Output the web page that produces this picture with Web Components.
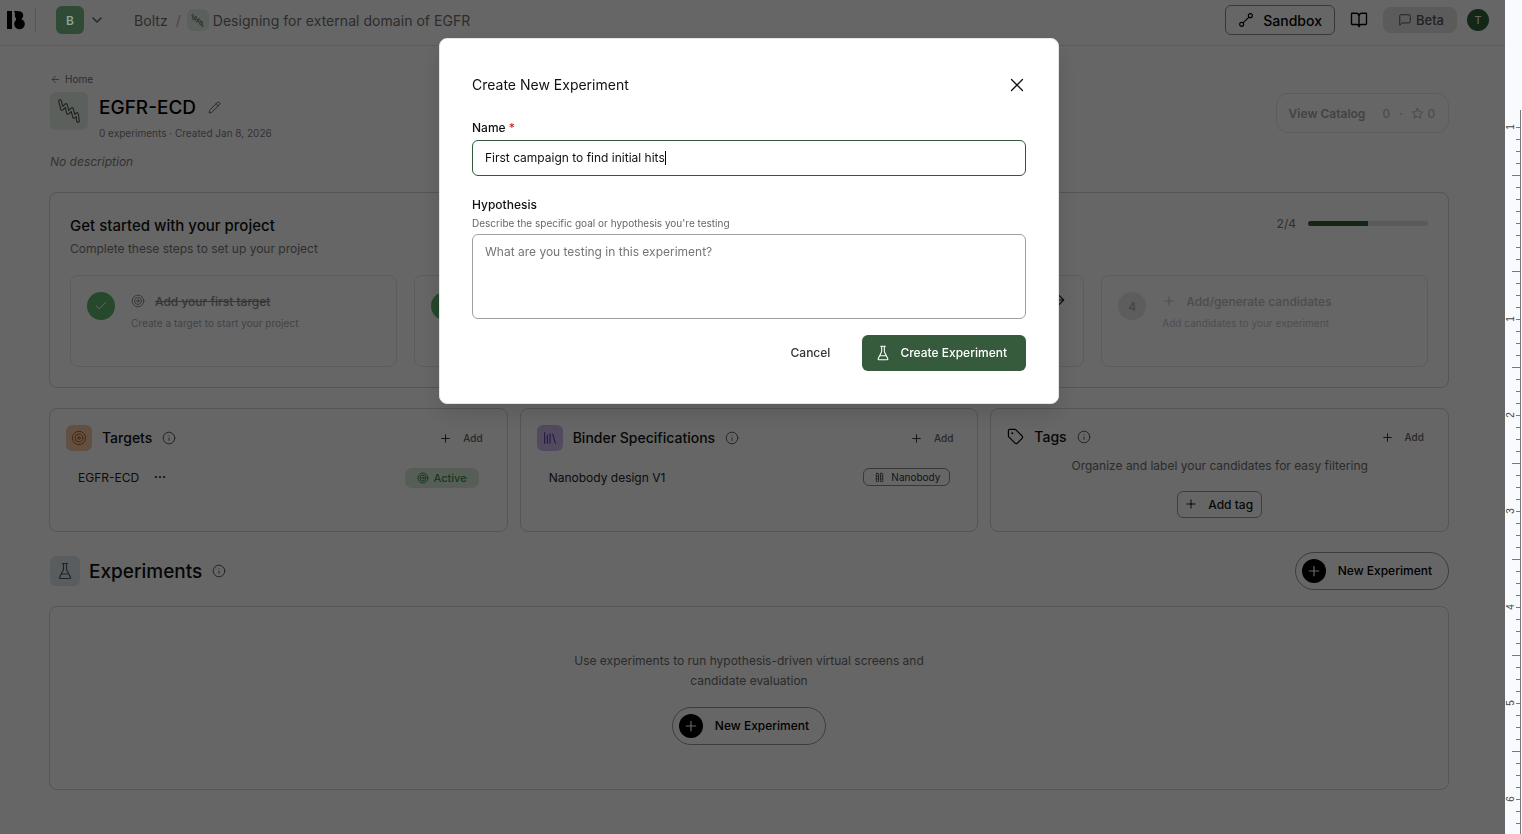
<!DOCTYPE html>
<html>
<head>
<meta charset="utf-8">
<title>EGFR-ECD</title>
<style>
  html, body { margin: 0; height: 100%; overflow: hidden; background: #fff; }
  body { display: flex; font-family: Inter, "Noto Sans", sans-serif; color: #000; }
  .app { position: relative; width: 1505px; height: 834px; flex: none; overflow: hidden; }
</style>
</head>
<body>
<div class="app">
  <app-topbar></app-topbar>
  <project-page></project-page>
  <experiment-modal></experiment-modal>
</div>
<page-ruler></page-ruler>

<script>
// lucide-ish paths, shared by everything
const ICONS = {
  target: '<circle cx="12" cy="12" r="10"/><circle cx="12" cy="12" r="6"/><circle cx="12" cy="12" r="2"/>',
  info: '<circle cx="12" cy="12" r="10"/><path d="M12 16v-4M12 8h.01"/>',
  plus: '<path d="M5 12h14M12 5v14"/>',
  x: '<path d="M18 6 6 18M6 6l12 12"/>',
  check: '<path d="M20 6 9 17l-5-5"/>',
  back: '<path d="m12 19-7-7 7-7M19 12H5"/>',
  right: '<path d="M5 12h14M12 5l7 7-7 7"/>',
  chevron: '<path d="m6 9 6 6 6-6"/>',
  pencil: '<path d="M21.2 6.8a2.8 2.8 0 0 0-4-4L3.8 16.2a2 2 0 0 0-.5.8l-1.3 4.4a.5.5 0 0 0 .6.6l4.4-1.3a2 2 0 0 0 .8-.5z"/><path d="m15 5 4 4"/>',
  star: '<path d="M12 2.5l2.9 6 6.6.9-4.8 4.6 1.2 6.5-5.9-3.1-5.9 3.1 1.2-6.5L2.5 9.4l6.6-.9z"/>',
  book: '<path d="M12 7v14M3 18a1 1 0 0 1-1-1V4a1 1 0 0 1 1-1h5a4 4 0 0 1 4 4 4 4 0 0 1 4-4h5a1 1 0 0 1 1 1v13a1 1 0 0 1-1 1h-6a3 3 0 0 0-3 3 3 3 0 0 0-3-3z"/>',
  message: '<path d="M21 15a2 2 0 0 1-2 2H7l-4 4V5a2 2 0 0 1 2-2h14a2 2 0 0 1 2 2z"/>',
  flask: '<path d="M10 2v7.5a2 2 0 0 1-.2.9L4.7 20.5a1 1 0 0 0 .9 1.5h12.8a1 1 0 0 0 .9-1.5l-5.1-10.1a2 2 0 0 1-.2-.9V2M8.5 2h7M7 16h10"/>',
  tag: '<path d="M12.6 2.6A2 2 0 0 0 11.2 2H4a2 2 0 0 0-2 2v7.2a2 2 0 0 0 .6 1.4l8.7 8.7a2.4 2.4 0 0 0 3.4 0l6.6-6.6a2.4 2.4 0 0 0 0-3.4z"/><circle cx="7.5" cy="7.5" r=".6"/>',
  library: '<path d="m16 6 4 14M12 6v14M8 8v12M4 4v16"/>',
  sandbox: '<circle cx="5.5" cy="18.5" r="3"/><circle cx="18.5" cy="5.5" r="3"/><path d="M8 16 16 8"/>',
  nanobody: '<rect x="5" y="3" width="5" height="18" rx="1"/><rect x="14" y="3" width="5" height="18" rx="1"/><path d="M5 9h5M5 15h5M14 9h5M14 15h5"/>',
  // ribbon: dark line with a lighter one down the middle
  helix: '<path d="M3 2 5 10 9 6 11 14 15 10 17 18 20 15 21 22" stroke-width="3.6"/><path d="M3 2 5 10 9 6 11 14 15 10 17 18 20 15 21 22" stroke="#e4efe5" stroke-width="1.6"/>'
};

class UiIcon extends HTMLElement {
  connectedCallback() {
    const size = this.getAttribute('size') || 16;
    const sw = this.getAttribute('stroke') || 2;
    const root = this.shadowRoot || this.attachShadow({ mode: 'open' });
    root.innerHTML = `<style>:host{display:inline-flex;flex:none;line-height:0}</style>
      <svg width="${size}" height="${size}" viewBox="0 0 24 24" fill="none" stroke="currentColor" stroke-width="${sw}" stroke-linecap="round" stroke-linejoin="round">${ICONS[this.getAttribute('name')] || ''}</svg>`;
  }
}
customElements.define('ui-icon', UiIcon);

class AppTopbar extends HTMLElement {
  constructor() {
    super();
    this.attachShadow({ mode: 'open' });
    this.shadowRoot.innerHTML = `
      <style>
        :host { display: flex; align-items: center; height: 45px; box-sizing: content-box; border-bottom: 1px solid #e8e8e8; font-size: 14px; padding: 0 16px 0 7px; }
        .wrap { display: flex; align-items: center; flex: 1; height: 40px; margin-bottom: 5px; }
        .logo { display: block; }
        .sep { width: 1px; height: 24px; background: #d8d8d8; margin: 0 20px 0 10px; }
        .org { position: relative; z-index: 60; width: 28px; height: 28px; border-radius: 6px; background: #2f4a35; color: #8fa493; display: flex; align-items: center; justify-content: center; font-size: 12px; font-weight: 600; }
        .chev { margin: 0 0 0 5px; color: #555; }
        .crumbs { display: flex; align-items: center; margin-left: 29px; color: #707070; letter-spacing: .04px; }
        .slash { color: #b0b0b0; margin: 0 6px 0 8px; }
        .badge { width: 22px; height: 22px; border-radius: 6px; background: #e4efe5; color: #555; display: flex; align-items: center; justify-content: center; margin-right: 4px; }
        .right { margin-left: auto; display: flex; align-items: center; }
        .sandbox { display: flex; align-items: center; gap: 9px; height: 28px; padding: 0 12px; border: 1px solid #8d8d8d; border-radius: 6px; color: #000; font-weight: 500; }
        .book { margin: 0 15px; color: #000; }
        .beta { display: flex; align-items: center; gap: 4px; height: 26px; padding: 0 13px 0 15px; border-radius: 8px; background: #e4e4e4; color: #555; font-size: 13px; font-weight: 500; }
        .avatar { margin-left: 10px; width: 22px; height: 22px; border-radius: 50%; background: #2f6237; color: #fff; display: flex; align-items: center; justify-content: center; font-size: 11px; }
      </style>
      <div class="wrap">
        <svg class="logo" width="18" height="20" viewBox="0 0 18 20"><path d="M0 1h5v18H0z"/><circle cx="12" cy="5.5" r="4.2"/><circle cx="12.5" cy="14" r="5.3"/><path d="M7 1h4v5H9zM9 8h4v3H9z"/></svg>
        <span class="sep"></span>
        <span class="org">B</span>
        <ui-icon class="chev" name="chevron" size="16"></ui-icon>
        <div class="crumbs">
          <span>Boltz</span><span class="slash">/</span>
          <span class="badge"><ui-icon name="helix" size="13"></ui-icon></span>
          <span>Designing for external domain of EGFR</span>
        </div>
        <div class="right">
          <span class="sandbox"><ui-icon name="sandbox" size="16" stroke="1.7"></ui-icon>Sandbox</span>
          <ui-icon class="book" name="book" size="18" stroke="1.8"></ui-icon>
          <span class="beta"><ui-icon name="message" size="14" stroke="1.7"></ui-icon>Beta</span>
          <span class="avatar">T</span>
        </div>
      </div>`;
  }
}
customElements.define('app-topbar', AppTopbar);

class SetupStep extends HTMLElement {
  constructor() {
    super();
    this.attachShadow({ mode: 'open' });
    const done = this.hasAttribute('done');
    const muted = this.hasAttribute('muted');
    this.shadowRoot.innerHTML = `
      <style>
        :host { display: flex; gap: 16px; padding: 16px; height: 92px; box-sizing: border-box; border: 1px solid #e6e6e6; border-radius: 8px; position: relative; }
        .num { width: 28px; height: 28px; border-radius: 50%; flex: none; display: flex; align-items: center; justify-content: center; font-size: 12px; font-weight: 600; background: ${done ? '#5fb36f' : '#e8e8e8'}; color: ${done ? '#fff' : '#b0b0b0'}; }
        .head { display: flex; align-items: center; gap: 10px; height: 18px; font-size: 12px; font-weight: 500; color: ${done ? '#888' : '#bdbdbd'}; }
        .head span { ${done ? 'text-decoration: line-through;' : ''} }
        .sub { margin-top: 5px; font-size: 10px; line-height: 16px; color: ${muted ? '#c4c4c4' : '#a8a8a8'}; letter-spacing: .03px; }
        .go { position: absolute; right: 16px; top: 16px; color: #222; }
      </style>
      <div class="num">${done ? '<ui-icon name="check" size="14" stroke="1.6"></ui-icon>' : (this.getAttribute('n') || '')}</div>
      <div>
        <div class="head"><ui-icon name="${this.getAttribute('icon')}" size="14" stroke="1.6"></ui-icon><span>${this.getAttribute('title') || ''}</span></div>
        <div class="sub">${this.getAttribute('sub') || ''}</div>
      </div>
      ${this.hasAttribute('go') ? '<ui-icon class="go" name="right" size="16" stroke="1.8"></ui-icon>' : ''}`;
  }
}
customElements.define('setup-step', SetupStep);

class InfoCard extends HTMLElement {
  constructor() {
    super();
    this.attachShadow({ mode: 'open' });
    const icon = this.getAttribute('icon');
    const tint = this.getAttribute('tint');
    const ink = this.getAttribute('ink');
    const box = tint
      ? `<span class="ico" style="background:${tint};color:${ink}"><ui-icon name="${icon}" size="16" stroke="1.5"></ui-icon></span>`
      : `<span class="plain"><ui-icon name="${icon}" size="17" stroke="1.7"></ui-icon></span>`;
    this.shadowRoot.innerHTML = `
      <style>
        :host { display: block; height: 124px; box-sizing: border-box; border: 1px solid #d4d4d4; border-radius: 8px; padding: 16px 16px 0; }
        .top { display: flex; align-items: center; height: 26px; }
        .ico { width: 26px; height: 26px; border-radius: 6px; display: flex; align-items: center; justify-content: center; margin-right: 10px; }
        .plain { display: flex; margin-right: 10px; margin-top: -2px; }
        .name { font-size: 14px; font-weight: 500; color: #111; padding-bottom: 1px; }
        .info { margin-left: 10px; color: #555; }
        .add { margin-left: auto; margin-right: 8px; display: flex; align-items: center; gap: 11px; font-size: 10px; font-weight: 500; color: #666; }
        .add ui-icon { color: #222; }
      </style>
      <div class="top" style="${tint ? '' : 'margin-top:-1px'}">
        ${box}
        <span class="name">${this.getAttribute('title')}</span>
        <ui-icon class="info" name="info" size="14" stroke="1.6"></ui-icon>
        <span class="add"><ui-icon name="plus" size="13" stroke="1.7"></ui-icon>Add</span>
      </div>
      <slot></slot>`;
  }
}
customElements.define('info-card', InfoCard);

class PillButton extends HTMLElement {
  constructor() {
    super();
    this.attachShadow({ mode: 'open' });
    this.shadowRoot.innerHTML = `
      <style>
        :host { display: inline-flex; align-items: center; gap: 12px; height: 38px; box-sizing: border-box; padding: 0 16px 0 6px; border: 1px solid #999; border-radius: 19px; font-size: 12px; font-weight: 500; color: #000; }
        .dot { width: 24px; height: 24px; border-radius: 50%; background: #000; color: #fff; display: flex; align-items: center; justify-content: center; }
        .label { padding-bottom: 1px; }
      </style>
      <span class="dot"><ui-icon name="plus" size="16" stroke="1.8"></ui-icon></span><span class="label"><slot></slot></span>`;
  }
}
customElements.define('pill-button', PillButton);

class ProjectPage extends HTMLElement {
  constructor() {
    super();
    this.attachShadow({ mode: 'open' });
    this.shadowRoot.innerHTML = `
      <style>
        :host { display: block; padding: 26px 56px 0 49px; }
        .home { display: flex; align-items: center; gap: 4px; height: 14px; margin-left: 1px; font-size: 10px; color: #707070; }
        .hero { display: flex; margin: 6px 0 0 1px; height: 49px; }
        .hero-ico { width: 38px; height: 38px; border-radius: 6px; background: #e4efe5; color: #444; display: flex; align-items: center; justify-content: center; margin-right: 11px; }
        .hero-title { display: flex; align-items: center; gap: 12px; height: 30px; font-size: 19px; font-weight: 500; }
        .hero-title ui-icon { color: #555; }
        .hero-sub { margin-top: 4px; font-size: 10px; line-height: 14px; color: #808080; }
        .catalog { margin-left: auto; margin-top: 1px; display: flex; align-items: center; height: 40px; box-sizing: border-box; padding: 0 13px 0 12px; border: 1px solid #e6e6e6; border-radius: 12px; font-size: 12px; color: #b8b8b8; }
        .catalog b { font-weight: 600; color: #a8a8a8; margin-right: 17px; }
        .catalog .mid { margin: 0 9px; }
        .catalog ui-icon { margin-right: 3px; color: #a8a8a8; }
        .desc { margin: 13px 0 0 1px; font-size: 12px; line-height: 16px; font-style: italic; color: #808080; }
        .started { margin-top: 22px; height: 196px; box-sizing: border-box; border: 1px solid #d4d4d4; border-radius: 8px; padding: 21px 20px 0; }
        .started-top { display: flex; height: 61px; }
        .started h2 { margin: 0; font-size: 15px; line-height: 24px; font-weight: 500; color: #111; }
        .started p { margin: 2px 0 0; font-size: 12px; line-height: 18px; color: #777; }
        .progress { margin-left: auto; margin-top: -1px; display: flex; align-items: center; gap: 12px; height: 20px; font-size: 12px; color: #777; }
        .bar { width: 120px; height: 5px; border-radius: 3px; background: #e2e2e2; overflow: hidden; }
        .bar i { display: block; width: 50%; height: 100%; background: #2f6237; }
        .steps { display: grid; grid-template-columns: repeat(4, 1fr); gap: 17px; }
        .cards { margin-top: 20px; display: grid; grid-template-columns: repeat(3, 1fr); gap: 12px; }
        .row { display: flex; align-items: center; justify-content: space-between; margin-top: 15px; padding: 0 11px 0 12px; font-size: 12px; height: 22px; color: #222; }
        .row .left { display: flex; align-items: center; gap: 15px; }
        .active { display: flex; align-items: center; gap: 5px; height: 20px; margin-right: 1px; margin-top: 1px; padding: 0 12px; border-radius: 7px; background: #d7ecd9; color: #3c8c4a; font-size: 11px; font-weight: 500; }
        .nano { display: flex; align-items: center; gap: 6px; height: 18px; box-sizing: border-box; padding: 0 9px 0 10px; border: 1px solid #8d8d8d; border-radius: 6px; font-size: 10px; color: #333; }
        .tags { text-align: center; margin-top: 7px; }
        .tags p { margin: 0; font-size: 12px; line-height: 18px; color: #6d6d6d; }
        .tagbtn { display: inline-flex; align-items: center; gap: 10px; height: 27px; box-sizing: border-box; margin-top: 16px; padding: 0 8px 1px 6px; border: 1px solid #999; border-radius: 6px; font-size: 12px; font-weight: 500; color: #111; }
        .exp-head { margin-top: 20px; display: flex; align-items: center; height: 38px; }
        .exp-ico { width: 30px; height: 30px; margin-left: 1px; border-radius: 6px; background: #dfe9ee; color: #555; display: flex; align-items: center; justify-content: center; margin-right: 9px; }
        .exp-head span.t { font-size: 19px; font-weight: 500; color: #111; }
        .exp-head ui-icon.i { margin-left: 10px; color: #555; }
        .exp-head pill-button { margin-left: auto; }
        .empty { margin-top: 16px; height: 184px; box-sizing: border-box; border: 1px solid #d4d4d4; border-radius: 8px; padding-top: 44px; display: flex; flex-direction: column; align-items: center; }
        .empty p { margin: 0; width: 380px; text-align: center; font-size: 12px; line-height: 20px; color: #6d6d6d; }
        .empty pill-button { margin-top: 16px; }
      </style>
      <div class="home"><ui-icon name="back" size="11" stroke="1.8"></ui-icon>Home</div>
      <div class="hero">
        <span class="hero-ico"><ui-icon name="helix" size="24" stroke="1.1"></ui-icon></span>
        <div>
          <div class="hero-title">EGFR-ECD<ui-icon name="pencil" size="13" stroke="1.7"></ui-icon></div>
          <div class="hero-sub">0 experiments · Created Jan 8, 2026</div>
        </div>
        <div class="catalog"><b>View Catalog</b>0<span class="mid">·</span><ui-icon name="star" size="13" stroke="1.6"></ui-icon>0</div>
      </div>
      <div class="desc">No description</div>
      <section class="started">
        <div class="started-top">
          <div><h2>Get started with your project</h2><p>Complete these steps to set up your project</p></div>
          <div class="progress">2/4<span class="bar"><i></i></span></div>
        </div>
        <div class="steps">
          <setup-step done icon="target" title="Add your first target" sub="Create a target to start your project"></setup-step>
          <setup-step done icon="library"></setup-step>
          <setup-step n="3" go icon="flask"></setup-step>
          <setup-step n="4" muted icon="plus" title="Add/generate candidates" sub="Add candidates to your experiment"></setup-step>
        </div>
      </section>
      <div class="cards">
        <info-card title="Targets" icon="target" tint="#f6c9a6" ink="#b95f12">
          <div class="row"><span class="left">EGFR-ECD<svg width="12" height="4" viewBox="0 0 12 4" fill="#222"><circle cx="2" cy="2" r="1.1"/><circle cx="6" cy="2" r="1.1"/><circle cx="10" cy="2" r="1.1"/></svg></span><span class="active"><ui-icon name="target" size="12" stroke="2"></ui-icon>Active</span></div>
        </info-card>
        <info-card title="Binder Specifications" icon="library" tint="#cdb8ee" ink="#5a2aa8">
          <div class="row"><span>Nanobody design V1</span><span class="nano"><ui-icon name="nanobody" size="11" stroke="1.6"></ui-icon>Nanobody</span></div>
        </info-card>
        <info-card title="Tags" icon="tag">
          <div class="tags"><p>Organize and label your candidates for easy filtering</p><span class="tagbtn"><ui-icon name="plus" size="14" stroke="1.7"></ui-icon>Add tag</span></div>
        </info-card>
      </div>
      <div class="exp-head">
        <span class="exp-ico"><ui-icon name="flask" size="18" stroke="1.5"></ui-icon></span>
        <span class="t">Experiments</span>
        <ui-icon class="i" name="info" size="14" stroke="1.6"></ui-icon>
        <pill-button>New Experiment</pill-button>
      </div>
      <div class="empty">
        <p>Use experiments to run hypothesis-driven virtual screens and candidate evaluation</p>
        <pill-button>New Experiment</pill-button>
      </div>`;
  }
}
customElements.define('project-page', ProjectPage);

class ExperimentModal extends HTMLElement {
  constructor() {
    super();
    this.attachShadow({ mode: 'open' });
    this.shadowRoot.innerHTML = `
      <style>
        :host { position: absolute; inset: 0; z-index: 50; background: rgba(0,0,0,.6); backdrop-filter: blur(.6px); display: flex; justify-content: center; align-items: flex-start; padding: 38px 7px 0 0; box-sizing: border-box; }
        .box { width: 620px; height: 366px; box-sizing: border-box; background: #fff; border: 1px solid #e5e5e5; border-radius: 8px; padding: 32px; box-shadow: 0 10px 25px rgba(0,0,0,.12); color: #111; }
        .head { display: flex; align-items: center; justify-content: space-between; height: 28px; font-size: 14px; }
        .head span { padding-bottom: 1px; }
        .head ui-icon { margin-right: -2px; }
        label { display: block; font-size: 12px; line-height: 16px; font-weight: 500; }
        label em { font-style: normal; color: #d4272b; }
        .name { margin-top: 21px; }
        .input { margin-top: 4px; height: 36px; box-sizing: border-box; display: flex; align-items: center; padding: 0 12px 1px; border: 1px solid #34593a; border-radius: 6px; font-size: 12px; }
        .caret { display: inline-block; width: 1px; height: 14px; background: #000; }
        .hyp { margin-top: 21px; }
        .help { margin-top: 3px; font-size: 10px; line-height: 14px; color: #666; }
        .area { margin-top: 4px; height: 85px; box-sizing: border-box; padding: 8px 12px; border: 1px solid #a0a0a0; border-radius: 6px; font-size: 12px; line-height: 18px; color: #757575; }
        .foot { margin-top: 16px; display: flex; justify-content: flex-end; align-items: center; }
        .cancel { font-size: 12px; font-weight: 500; margin-right: 32px; padding-bottom: 1px; color: #333; }
        .create { display: flex; align-items: center; gap: 9px; height: 36px; box-sizing: border-box; padding: 0 19px 1px 13px; border-radius: 6px; background: #355a3c; color: #fff; font-size: 12px; font-weight: 500; }
      </style>
      <div class="box" role="dialog">
        <div class="head"><span>Create New Experiment</span><ui-icon name="x" size="22" stroke="1.4"></ui-icon></div>
        <label class="name">Name <em>*</em></label>
        <div class="input"><span>First campaign to find initial hits</span><span class="caret"></span></div>
        <label class="hyp">Hypothesis</label>
        <div class="help">Describe the specific goal or hypothesis you're testing</div>
        <div class="area">What are you testing in this experiment?</div>
        <div class="foot">
          <span class="cancel">Cancel</span>
          <span class="create"><ui-icon name="flask" size="16" stroke="1.6"></ui-icon>Create Experiment</span>
        </div>
      </div>`;
  }
}
customElements.define('experiment-modal', ExperimentModal);

class PageRuler extends HTMLElement {
  constructor() {
    super();
    this.attachShadow({ mode: 'open' });
    let marks = '';
    const labels = { 127: 1, 319: 1, 415: 2, 511: 3, 607: 4, 703: 5, 799: 6 };
    for (let y = 127; y < 834; y += 12) {
      const long = (y - 127) % 96 === 48 && y > 127;
      marks += `<i style="top:${y}px;width:${long ? 9 : 5}px"></i>`;
      if (labels[y]) marks += `<b style="top:${y - 7}px">${labels[y]}</b>`;
    }
    this.shadowRoot.innerHTML = `
      <style>
        :host { display: block; position: relative; width: 17px; height: 834px; background: #f9fafd; overflow: hidden; }
        .line { position: absolute; right: 1px; top: 110px; bottom: 0; width: 1px; background: #777; }
        i { position: absolute; right: 1px; height: 1px; background: #777; }
        b { position: absolute; left: 1px; width: 10px; height: 14px; line-height: 14px; text-align: center; font: 400 10px/14px "Liberation Sans", sans-serif; color: #444; transform: rotate(-90deg); }
      </style>
      <div class="line"></div>${marks}`;
  }
}
customElements.define('page-ruler', PageRuler);
</script>
</body>
</html>
